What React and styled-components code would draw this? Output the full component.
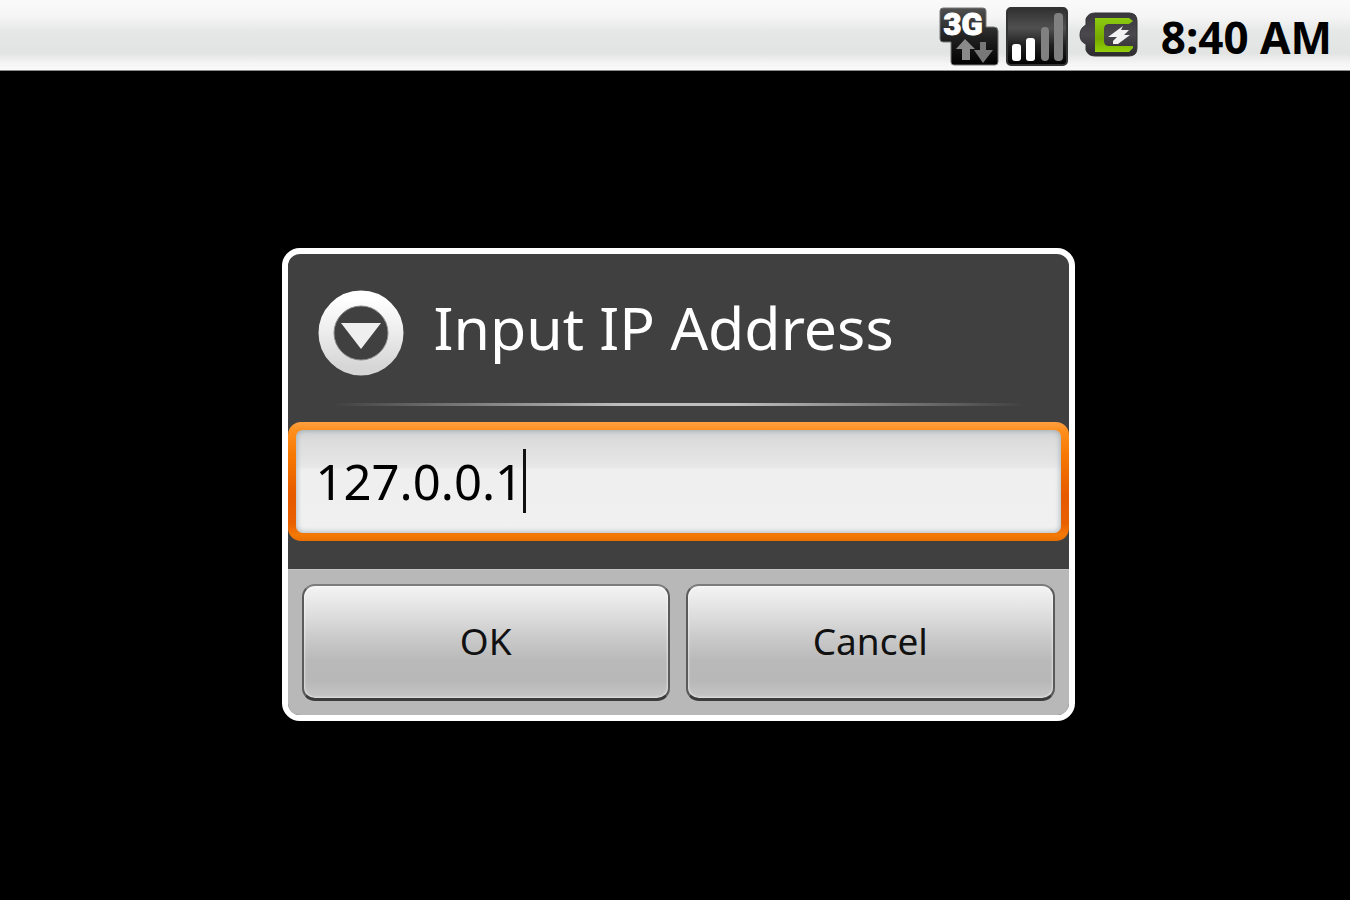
import React, { useState } from 'react';
import styled, { createGlobalStyle } from 'styled-components';

const GlobalStyle = createGlobalStyle`
  * {
    box-sizing: border-box;
  }

  body {
    margin: 0;
    background-color: #000;
    font-family: 'Noto Sans', 'Open Sans', sans-serif;
  }
`;

const Screen = styled.div`
  display: flex;
  flex-direction: column;
  min-height: 100vh;
  background-color: #000;
`;

const StatusBar = styled.header`
  display: flex;
  align-items: center;
  justify-content: flex-end;
  height: 71px;
  padding: 3px 18px 0 20px;
  border-bottom: 1px solid #8c8c8c;
  background: linear-gradient(#fafafa 0%, #f5f5f5 24%, #e6e8e7 44%, #e2e4e3 76%, #f4f4f4 90%, #fafafa 100%);
`;

const StatusIcons = styled.div`
  display: flex;
  align-items: center;
  gap: 6px;
  margin-right: 20px;

  svg {
    display: block;
  }
`;

const Clock = styled.time`
  color: #000;
  font-size: 44px;
  font-weight: 700;
  line-height: 64px;
  white-space: nowrap;
`;

const Stage = styled.main`
  flex: 1;
  display: flex;
  align-items: center;
  justify-content: center;
  padding: 0 0 2px 6px;
`;

const Dialog = styled.form`
  width: 100%;
  max-width: 793px;
  border: 6px solid #fff;
  border-radius: 18px;
  background-color: #404040;
  overflow: hidden;
`;

const DialogHeader = styled.div`
  display: flex;
  align-items: flex-start;
  gap: 26px;
  padding: 36px 30px 26px;

  svg {
    flex: none;
    display: block;
  }
`;

const Title = styled.h1`
  margin: 0;
  padding-left: 4px;
  color: #fff;
  font-size: 59px;
  font-weight: 400;
  line-height: 74px;
  white-space: nowrap;
`;

const Divider = styled.div`
  height: 4px;
  margin: 0 44px 16px;
  background: linear-gradient(
    90deg,
    rgba(200, 200, 200, 0) 0%,
    rgba(205, 205, 205, 0.9) 42%,
    rgba(205, 205, 205, 0.9) 58%,
    rgba(200, 200, 200, 0) 100%
  );
  border-top: 1px solid #404040;
`;

const FieldFrame = styled.label`
  display: block;
  padding: 8px;
  margin-bottom: 28px;
  border-radius: 13px;
  background: linear-gradient(#ffa042 0%, #ff8f1f 7%, #f57600 30%, #e65a00 62%, #e86000 85%, #f47a06 95%, #e86e00 100%);
  cursor: text;
`;

const Field = styled.span`
  display: flex;
  align-items: center;
  height: 103px;
  padding: 0 20px 2px;
  border-radius: 7px;
  background: linear-gradient(#d4d4d4 0%, #dedede 14%, #e4e4e4 30%, #e8e8e8 36%, #efefef 39%, #f0f0f0 100%);
  box-shadow: inset 0 0 5px 1px rgba(130, 150, 160, 0.6);
`;

const AddressInput = styled.input`
  field-sizing: content;
  max-width: 100%;
  padding: 0;
  border: none;
  outline: none;
  background: none;
  color: #000;
  caret-color: transparent;
  font-family: inherit;
  font-size: 49px;
  line-height: 64px;
`;

const Caret = styled.span`
  width: 3px;
  height: 64px;
  background-color: #111;
`;

const ButtonBar = styled.div`
  display: flex;
  gap: 16px;
  padding: 14px;
  border-top: 1px solid #c4c4c4;
  background-color: #b8b8b8;
`;

const DialogButton = styled.button`
  flex: 1;
  height: 117px;
  padding: 0 0 3px;
  border: 2px solid;
  border-color: #7c7c7c #5a5a5a #3c3c3c;
  border-bottom-width: 3px;
  border-radius: 13px;
  background: linear-gradient(
    #f4f4f4 0%,
    #e8e8e8 14%,
    #dadada 30%,
    #cdcdcd 43%,
    #c2c2c2 56%,
    #b9b9b9 67%,
    #b8b8b8 85%,
    #c6c6c6 100%
  );
  box-shadow: inset 0 0 2px 1px rgba(255, 255, 255, 0.5);
  color: #111;
  font-family: inherit;
  font-size: 37px;
  cursor: pointer;

  &:active {
    background: #ff9a2e;
  }
`;

const NetworkIcon = () => (
  <svg width="60" height="60" viewBox="0 0 60 60" aria-hidden="true">
    <defs>
      <linearGradient id="network" x1="0" y1="0" x2="0" y2="1">
        <stop offset="0" stopColor="#505050" />
        <stop offset="0.5" stopColor="#222" />
        <stop offset="1" stopColor="#000" />
      </linearGradient>
    </defs>
    <path
      d="M4 1H44Q47 1 47 4V20H55Q59 20 59 24V55Q59 58 56 58H15Q12 58 12 55V35H4Q1 35 1 32V4Q1 1 4 1Z"
      fill="url(#network)"
      stroke="#777"
      strokeWidth="1"
    />
    <text
      x="24"
      y="28"
      fill="#fff"
      stroke="#fff"
      strokeWidth="1"
      fontFamily="Roboto, sans-serif"
      fontSize="31"
      fontWeight="900"
      textAnchor="middle"
    >
      3G
    </text>
    <path d="M26 32L36 42H31V53H23V42H17Z" fill="#8a8a8a" />
    <path d="M41 35H47V43H54L44 56L35 43H41Z" fill="#777" />
  </svg>
);

const SignalIcon = () => (
  <svg width="64" height="60" viewBox="0 0 64 60" aria-hidden="true">
    <defs>
      <linearGradient id="signal" x1="0" y1="0" x2="0" y2="1">
        <stop offset="0" stopColor="#303030" />
        <stop offset="0.35" stopColor="#505050" />
        <stop offset="0.65" stopColor="#202020" />
        <stop offset="1" stopColor="#000" />
      </linearGradient>
    </defs>
    <rect x="2" y="1" width="60" height="57" rx="4" fill="url(#signal)" stroke="#333" strokeWidth="2" />
    <rect x="7" y="37" width="9" height="17" rx="3" fill="#fff" />
    <rect x="21" y="31" width="9" height="23" rx="3" fill="#fff" />
    <rect x="36" y="20" width="8" height="34" rx="4" fill="#808080" />
    <rect x="49" y="6" width="9" height="48" rx="4" fill="#808080" />
  </svg>
);

const BatteryIcon = () => (
  <svg width="66" height="60" viewBox="0 0 66 60" aria-hidden="true">
    <defs>
      <linearGradient id="charge" x1="0" y1="0" x2="0" y2="1">
        <stop offset="0" stopColor="#8ccc10" />
        <stop offset="0.6" stopColor="#76a800" />
        <stop offset="1" stopColor="#90d008" />
      </linearGradient>
      <linearGradient id="shell" x1="0" y1="0" x2="0" y2="1">
        <stop offset="0" stopColor="#3a383c" />
        <stop offset="0.5" stopColor="#4a484c" />
        <stop offset="1" stopColor="#2c2a2e" />
      </linearGradient>
    </defs>
    <path
      d="M20 6H54Q62 6 62 14V41Q62 49 54 49H20Q13 49 11 43V37Q5 35 5 28Q5 21 11 18V12Q13 6 20 6Z"
      fill="url(#shell)"
      stroke="#333"
      strokeWidth="1"
    />
    <path d="M20 11H54L58 14L54 17H34Q29 17 29 22V34Q29 39 34 39H58V41L54 45H20Z" fill="url(#charge)" />
    <path d="M48 19L33 30H42L38 34V37H43L55 28H49L54 23H46Z" fill="#f2f2f2" />
  </svg>
);

const DialogIcon = () => (
  <svg width="86" height="86" viewBox="0 0 86 86" aria-hidden="true">
    <defs>
      <linearGradient id="ring" x1="0" y1="0" x2="0" y2="1">
        <stop offset="0" stopColor="#fff" />
        <stop offset="0.5" stopColor="#ececec" />
        <stop offset="1" stopColor="#d6d6d6" />
      </linearGradient>
    </defs>
    <circle cx="43" cy="43" r="34" fill="none" stroke="url(#ring)" strokeWidth="17" />
    <circle cx="43" cy="43" r="27" fill="#404040" stroke="#8a8a8a" strokeWidth="1" />
    <path d="M23 33H63L43 59Z" fill="#efefef" />
  </svg>
);

const App = () => {
  const [address, setAddress] = useState('127.0.0.1');

  const handleSubmit = (e) => {
    e.preventDefault();
  };

  return (
    <Screen>
      <GlobalStyle />
      <StatusBar>
        <StatusIcons>
          <NetworkIcon />
          <SignalIcon />
          <BatteryIcon />
        </StatusIcons>
        <Clock>8:40 AM</Clock>
      </StatusBar>

      <Stage>
        <Dialog onSubmit={handleSubmit}>
          <DialogHeader>
            <DialogIcon />
            <Title id="dialog-title">Input IP Address</Title>
          </DialogHeader>
          <Divider />
          <FieldFrame htmlFor="ip-address">
            <Field>
              <AddressInput
                id="ip-address"
                type="text"
                aria-labelledby="dialog-title"
                autoComplete="off"
                value={address}
                onChange={(e) => setAddress(e.target.value)}
              />
              <Caret />
            </Field>
          </FieldFrame>
          <ButtonBar>
            <DialogButton type="submit">OK</DialogButton>
            <DialogButton type="button">Cancel</DialogButton>
          </ButtonBar>
        </Dialog>
      </Stage>
    </Screen>
  );
};

export default App;
